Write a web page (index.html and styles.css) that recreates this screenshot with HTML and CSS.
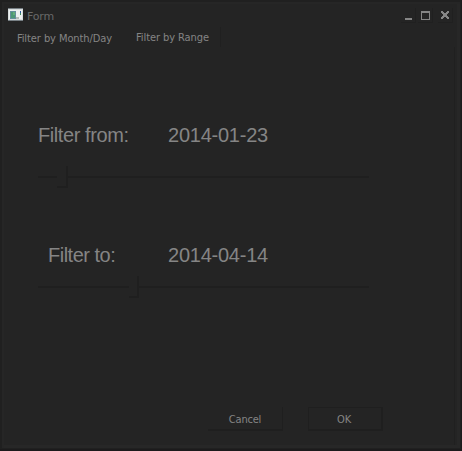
FILE: index.html
```html
<!DOCTYPE html>
<html lang="en">
<head>
<meta charset="utf-8">
<title>Form</title>
<link rel="stylesheet" href="styles.css">
</head>
<body>
<div class="window">
  <header class="titlebar">
    <svg class="app-icon" width="15" height="13" viewBox="0 0 15 13" shape-rendering="crispEdges">
      <path fill="#777f84" d="M0 0h15v13H0z"/>
      <path fill="#d7dcdd" d="M0 1h15v11H0z"/>
      <path fill="#eef0f0" d="M1 2h13v9H1z"/>
      <path fill="#668f9b" d="M2 3h6v8H2z"/>
      <path fill="#4e9876" d="M3 4h4v6H3z"/>
      <path fill="#65ad7b" d="M5 4h2v3H5z"/>
      <path fill="#315ca0" d="M12 3h1v2h-1z"/>
      <path fill="#438c62" d="M12 5h1v2h-1z"/>
      <path fill="#b5bab8" d="M8 9h3v2H8z"/>
    </svg>
    <h1 class="title">Form</h1>
    <div class="controls">
      <button class="control" aria-label="Minimize"><svg width="9" height="9" shape-rendering="crispEdges"><path fill="#858585" d="M1 7h7v2H1z"/></svg></button>
      <button class="control" aria-label="Maximize"><svg width="9" height="9" shape-rendering="crispEdges"><path fill="#858585" fill-rule="evenodd" d="M0 0h9v9H0zM1 2v6h7V2z"/></svg></button>
      <button class="control" aria-label="Close"><svg width="8" height="8" shape-rendering="crispEdges"><path fill="#858585" d="M0 0h2v1h1v1h2V1h1V0h2v2H7v1H6v2h1v1h1v2H6V7H5V6H3v1H2v1H0V6h1V5h1V3H1V2H0z"/></svg></button>
    </div>
  </header>
  <nav class="tabs">
    <button class="tab">Filter by Month/Day</button>
    <button class="tab active">Filter by Range</button>
  </nav>
  <main class="panel">
    <section class="filter from">
      <div class="readout"><span class="label">Filter from:</span><span class="date">2014-01-23</span></div>
      <div class="slider"><i class="track before"></i><i class="thumb"></i><i class="track rest"></i></div>
    </section>
    <section class="filter to">
      <div class="readout"><span class="label">Filter to:</span><span class="date">2014-04-14</span></div>
      <div class="slider"><i class="track before"></i><i class="thumb"></i><i class="track rest"></i></div>
    </section>
    <footer class="actions">
      <button class="action">Cancel</button>
      <button class="action default">OK</button>
    </footer>
  </main>
</div>
</body>
</html>
```
FILE: styles.css
```css
* { box-sizing: border-box; }
body { margin: 0; background: #1c1b1c; color: #858585; overflow: hidden; }
button { border: 0; padding: 0; background: none; color: inherit; font: 11px/14px "DejaVu Sans Condensed", "DejaVu Sans", sans-serif; }
.window {
  width: 461px; height: 449px; display: flex; flex-direction: column;
  background: #242424; border: solid #202020; border-width: 2px 1px 1px 2px;
  box-shadow: inset 2px 2px #262626, inset -3px -3px #272727;
}
.titlebar { height: 25px; display: flex; align-items: flex-start; padding: 6px 7px 0 6px; }
.app-icon { flex: none; }
.title { margin: 2px 0 0 4px; font: 11px/14px "DejaVu Sans", sans-serif; color: #686868; letter-spacing: -.2px; }
.controls { display: flex; margin-left: auto; gap: 2px; }
.control { width: 15px; height: 15px; display: flex; align-items: center; justify-content: center; border: solid #202020; border-width: 0 1px 1px 0; }
.control:last-child { margin-left: 3px; }
.tabs { display: flex; height: 20px; padding-left: 4px; }
.tab { width: 117px; padding-top: 3px; letter-spacing: -.08px; white-space: nowrap; }
.tab.active { width: 98px; padding: 2px 0 0 2px; border-right: 1px solid #202020; }
.panel { flex: 1; margin: 0 5px 3px 4px; padding: 75px 0 0 32px; border-right: 1px solid #202020; }
.filter { height: 120px; width: 331px; }
.readout { display: flex; height: 26px; font: 20px/26px "Liberation Sans", Arial, sans-serif; }
.label { width: 130px; letter-spacing: -.42px; }
.date { letter-spacing: -.24px; }
.to .label { padding-left: 10px; letter-spacing: -.5px; }
.slider { display: flex; height: 24px; margin-top: 17px; align-items: center; }
.to .slider { margin-top: 7px; }
.track { height: 2px; background: #1f1f1f; width: 19px; }
.to .track { width: 91px; }
.slider .track.rest { flex: 1; width: auto; }
.thumb { width: 11px; height: 22px; border: solid #1f1f1f; border-width: 0 2px 2px 0; }
.to .thumb { width: 10px; }
.actions { display: flex; gap: 25px; margin: 45px 0 0 170px; }
.action { width: 75px; height: 24px; padding-top: 3px; border: solid #1f1f1f; border-width: 0 1px 2px 0; letter-spacing: -.2px; }
.default { padding: 3px 2px 0 0; border-width: 1px 2px 2px 1px; }
```
